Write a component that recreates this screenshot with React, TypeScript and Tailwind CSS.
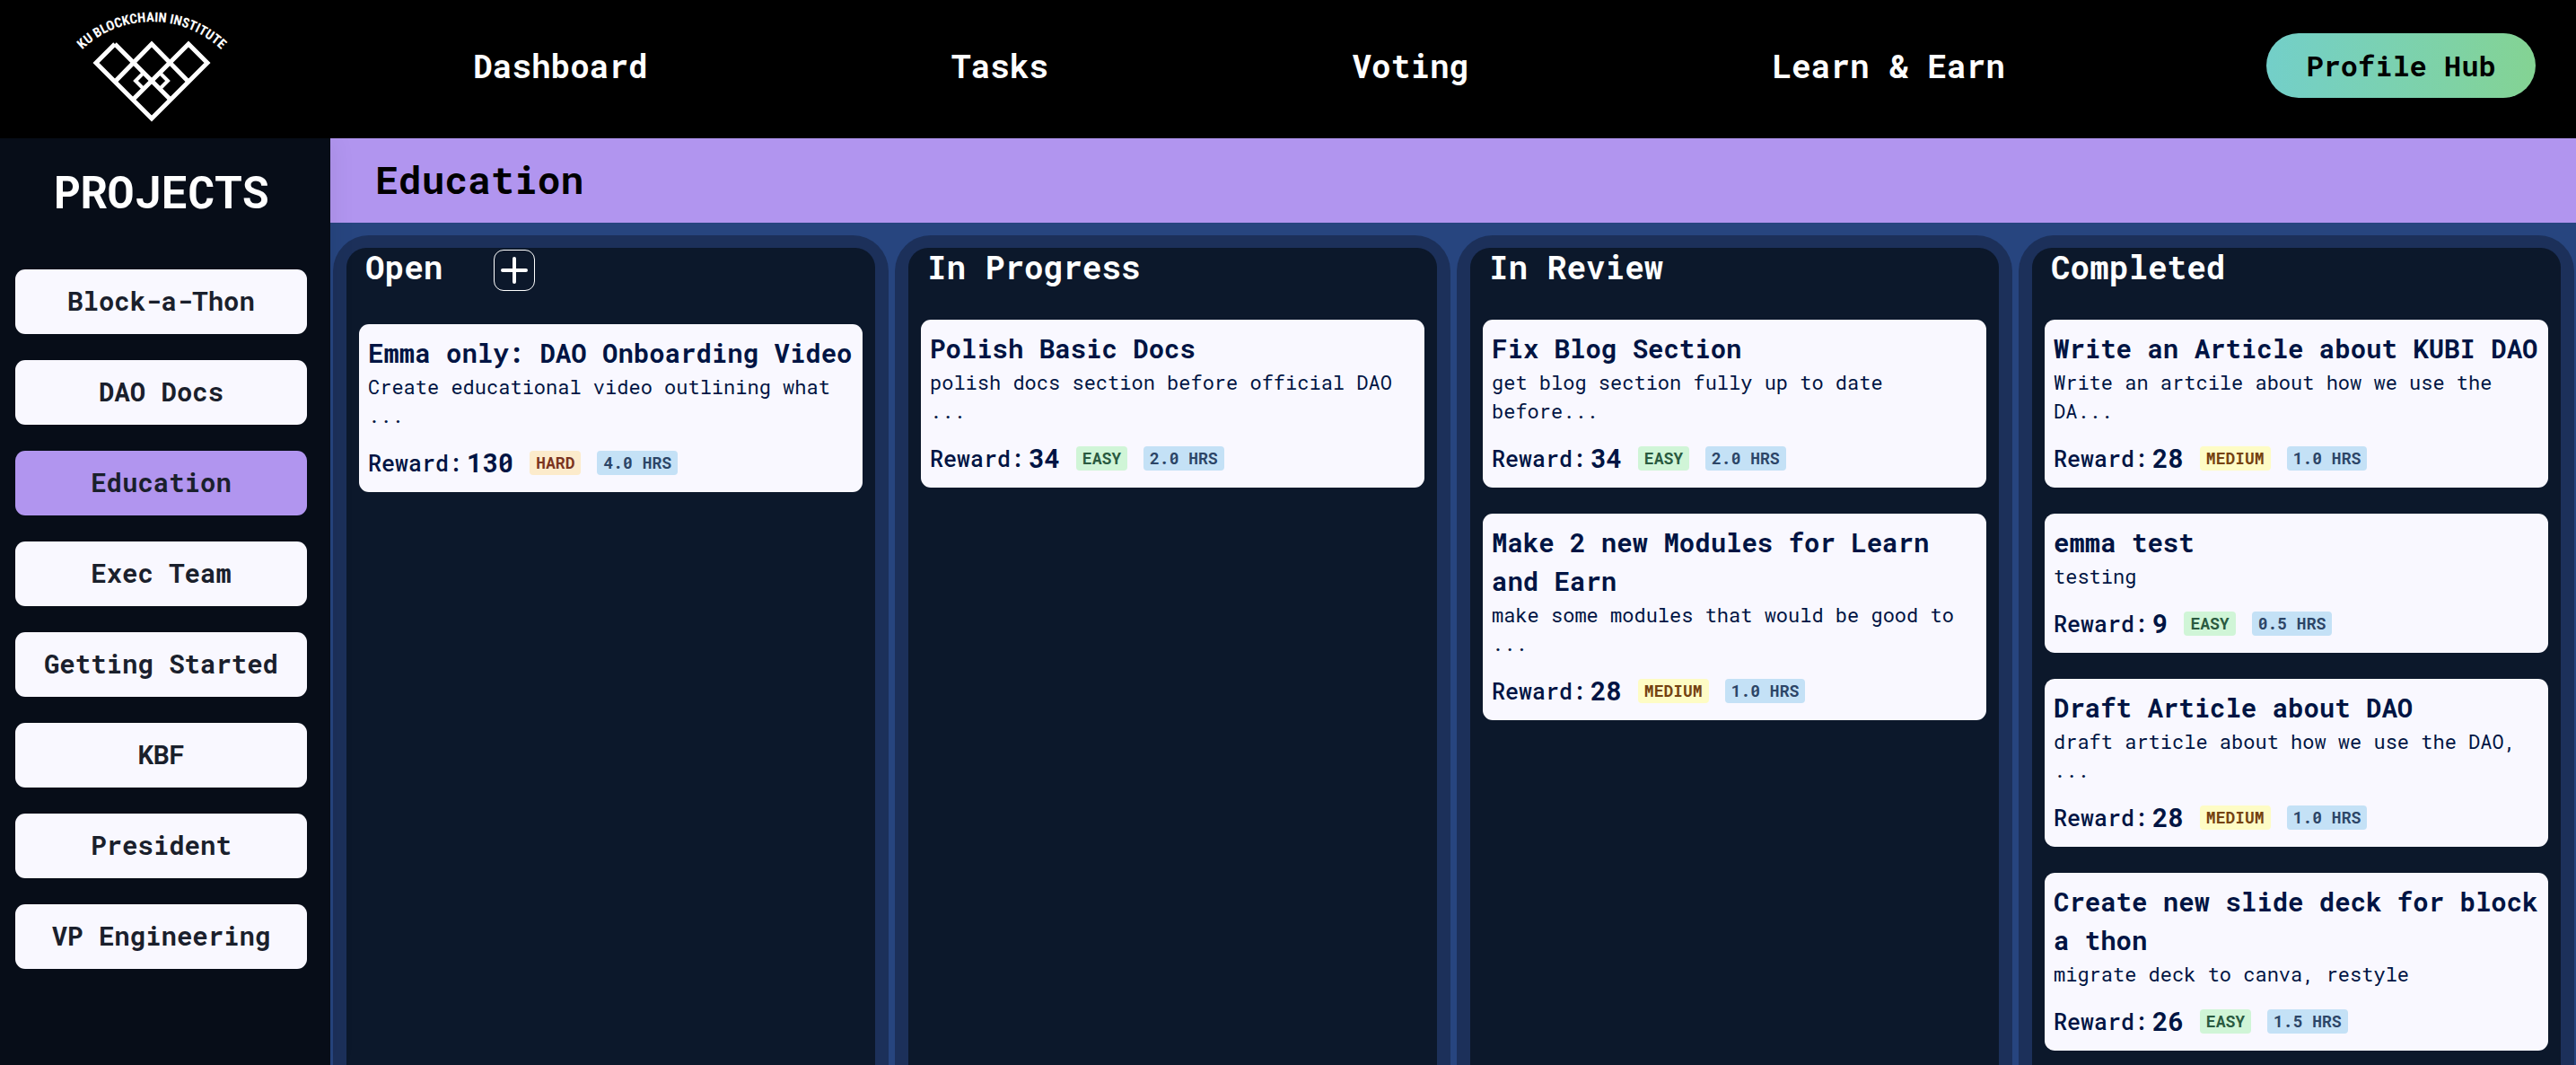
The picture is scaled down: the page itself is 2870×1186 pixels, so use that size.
import React from "react";

type Level = "EASY" | "MEDIUM" | "HARD";

interface Task {
  title: string;
  summary: string;
  reward: number;
  level: Level;
  hours: string;
}

interface Column {
  name: string;
  canAdd?: boolean;
  tasks: Task[];
}

const navItems = ["Dashboard", "Tasks", "Voting", "Learn & Earn"];

const projects = [
  "Block-a-Thon",
  "DAO Docs",
  "Education",
  "Exec Team",
  "Getting Started",
  "KBF",
  "President",
  "VP Engineering",
];

const columns: Column[] = [
  {
    name: "Open",
    canAdd: true,
    tasks: [
      { title: "Emma only: DAO Onboarding Video", summary: "Create educational video outlining what ...", reward: 130, level: "HARD", hours: "4.0" },
    ],
  },
  {
    name: "In Progress",
    tasks: [
      { title: "Polish Basic Docs", summary: "polish docs section before official DAO ...", reward: 34, level: "EASY", hours: "2.0" },
    ],
  },
  {
    name: "In Review",
    tasks: [
      { title: "Fix Blog Section", summary: "get blog section fully up to date before...", reward: 34, level: "EASY", hours: "2.0" },
      { title: "Make 2 new Modules for Learn and Earn", summary: "make some modules that would be good to ...", reward: 28, level: "MEDIUM", hours: "1.0" },
    ],
  },
  {
    name: "Completed",
    tasks: [
      { title: "Write an Article about KUBI DAO", summary: "Write an artcile about how we use the DA...", reward: 28, level: "MEDIUM", hours: "1.0" },
      { title: "emma test", summary: "testing", reward: 9, level: "EASY", hours: "0.5" },
      { title: "Draft Article about DAO", summary: "draft article about how we use the DAO, ...", reward: 28, level: "MEDIUM", hours: "1.0" },
      { title: "Create new slide deck for block a thon", summary: "migrate deck to canva, restyle", reward: 26, level: "EASY", hours: "1.5" },
    ],
  },
];

const levelStyles: Record<Level, string> = {
  EASY: "bg-[#d0f5d7] text-[#2a5a40]",
  MEDIUM: "bg-[#fefcc5] text-[#744210]",
  HARD: "bg-[#fcebcb] text-[#7b341e]",
};

function Logo() {
  return (
    <svg viewBox="0 0 180 140" className="h-[140px] w-[180px] shrink-0" role="img" aria-label="KU Blockchain Institute">
      <path id="logo-arc" d="M 6 58 A 112 112 0 0 1 172 58" fill="none" />
      <text fill="#fff" fontFamily="'Roboto Condensed', 'Open Sans', sans-serif" fontWeight="700" fontSize="15">
        <textPath href="#logo-arc" startOffset="50%" textAnchor="middle">
          KU BLOCKCHAIN INSTITUTE
        </textPath>
      </text>
      <g fill="none" stroke="#fff" strokeWidth="5" strokeLinejoin="miter">
        <path d="M48 46 L27 67 L89 129 L151 67 L130 46 L68 108" />
        <path d="M48 46 L110 108" />
        <path d="M48 88 L89 46 L130 88" />
        <path d="M80 78 L71 87 L80 96 M98 78 L107 87 L98 96" strokeWidth="4" />
      </g>
    </svg>
  );
}

function Badge({ className, children }: { className: string; children: React.ReactNode }) {
  return <span className={`rounded-sm px-[7px] text-[18px] leading-[27px] font-bold ${className}`}>{children}</span>;
}

function TaskCard({ task }: { task: Task }) {
  return (
    <article className="rounded-[11px] bg-[#f9f8ff] px-[10px] py-[11px] text-[#001443]">
      <h3 className="text-[29px] leading-[43px] font-bold">{task.title}</h3>
      <p className="text-[22px] leading-[32px]">{task.summary}</p>
      <div className="mt-[15px] flex h-[43px] items-center gap-[18px]">
        <p className="flex items-center gap-[5px] text-[25px] font-medium">
          Reward:<strong className="text-[29px] font-bold">{task.reward}</strong>
        </p>
        <Badge className={levelStyles[task.level]}>{task.level}</Badge>
        <Badge className="bg-[#c4e1f6] text-[#2c4567]">{task.hours} HRS</Badge>
      </div>
    </article>
  );
}

function BoardColumn({ column }: { column: Column }) {
  return (
    <section className="flex min-w-0 flex-1 flex-col rounded-t-[40px] bg-[#1c305a] px-[15px] pt-[14px]">
      <div className="flex-1 rounded-t-[22px] bg-[#0c182b] px-[14px]">
        <div className="mb-[37px] flex items-start gap-[57px] pl-[7px]">
          <h2 className="text-[36px] leading-[43px] font-bold text-white">{column.name}</h2>
          {column.canAdd && (
            <button
              type="button"
              aria-label="Add task"
              className="mt-[2px] flex size-[46px] items-center justify-center rounded-[11px] border border-white text-white"
            >
              <svg viewBox="0 0 30 30" className="size-[30px]" stroke="currentColor" strokeWidth="4" strokeLinecap="round">
                <path d="M15 2v26M2 15h26" />
              </svg>
            </button>
          )}
        </div>
        <div className="flex flex-col gap-[29px]">
          {column.tasks.map((task) => (
            <TaskCard key={task.title} task={task} />
          ))}
        </div>
      </div>
    </section>
  );
}

export default function App() {
  return (
    <div className="flex min-h-screen flex-col bg-black font-['Roboto_Mono','DejaVu_Sans_Mono',monospace]">
      <header className="flex h-[154px] items-center bg-black pr-[45px] pb-[8px]">
        <a href="#home" className="flex w-[358px] pl-20">
          <Logo />
        </a>
        <nav className="flex flex-1 justify-around pr-[122px]">
          {navItems.map((item) => (
            <a key={item} href="#nav" className="text-[36px] font-bold whitespace-nowrap text-white">
              {item}
            </a>
          ))}
        </nav>
        <button
          type="button"
          className="h-[72px] w-[300px] rounded-full bg-linear-to-r from-[#73cfc9] to-[#84d393] text-[32px] font-bold text-black"
        >
          Profile Hub
        </button>
      </header>
      <div className="flex flex-1">
        <aside className="z-10 w-[368px] shrink-0 bg-[#070d18] pr-[26px] pl-[17px] shadow-[0_0_28px_rgba(0,0,0,0.08)]">
          <h2 className="pt-[29px] text-center text-[50px] leading-[60px] font-bold text-white">PROJECTS</h2>
          <div className="mt-[57px] flex flex-col gap-[29px]">
            {projects.map((project) => (
              <button
                key={project}
                type="button"
                className={`h-[72px] rounded-[11px] text-[29px] font-bold text-[#1a202c] ${
                  project === "Education" ? "bg-[#b195ef]" : "bg-[#f9f8ff]"
                }`}
              >
                {project}
              </button>
            ))}
          </div>
        </aside>
        <main className="flex min-w-0 flex-1 flex-col bg-[#27457f]">
          <h1 className="bg-[#b195ef] px-[50px] pb-[2px] text-[43px] leading-[92px] font-bold text-black">Education</h1>
          <div className="flex flex-1 gap-[7px] pt-[14px] pr-[2px] pl-[3px]">
            {columns.map((column) => (
              <BoardColumn key={column.name} column={column} />
            ))}
          </div>
        </main>
      </div>
    </div>
  );
}
